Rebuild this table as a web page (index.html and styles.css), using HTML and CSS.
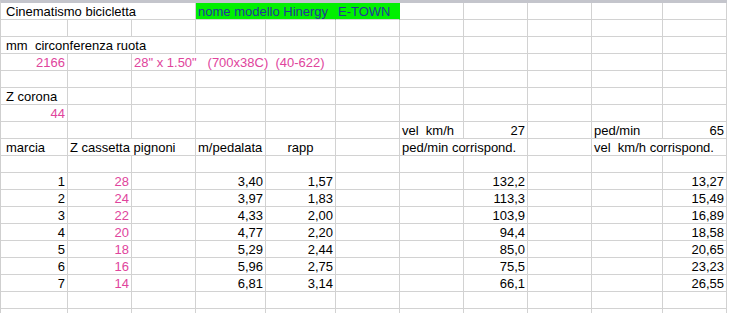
FILE: index.html
```html
<!DOCTYPE html>
<html>
<head>
<meta charset="utf-8">
<link rel="stylesheet" href="styles.css">
</head>
<body>
<table class="sheet">
<colgroup>
<col class="c-a"><col class="c-b"><col class="c-c"><col class="c-d"><col class="c-e"><col class="c-f"><col class="c-g"><col class="c-h"><col class="c-i"><col class="c-j"><col class="c-k">
</colgroup>
<tbody>
<tr><td class="first" colspan="3">Cinematismo bicicletta</td><td class="green" colspan="2">nome modello Hinergy</td><td class="green">E-TOWN</td><td></td><td></td><td></td><td></td><td></td></tr>
<tr><td></td><td></td><td></td><td></td><td></td><td></td><td></td><td></td><td></td><td></td><td></td></tr>
<tr><td class="first" colspan="3">mm  circonferenza ruota</td><td></td><td></td><td></td><td></td><td></td><td></td><td></td><td></td></tr>
<tr><td class="num pink">2166</td><td></td><td class="pink" colspan="3">28" x 1.50"   (700x38C)  (40-622)</td><td></td><td></td><td></td><td></td><td></td><td></td></tr>
<tr><td></td><td></td><td></td><td></td><td></td><td></td><td></td><td></td><td></td><td></td><td></td></tr>
<tr><td class="first">Z corona</td><td></td><td></td><td></td><td></td><td></td><td></td><td></td><td></td><td></td><td></td></tr>
<tr><td class="num pink">44</td><td></td><td></td><td></td><td></td><td></td><td></td><td></td><td></td><td></td><td></td></tr>
<tr><td></td><td></td><td></td><td></td><td></td><td></td><td>vel  km/h</td><td class="num">27</td><td></td><td>ped/min</td><td class="num">65</td></tr>
<tr><td class="first">marcia</td><td colspan="2">Z cassetta pignoni</td><td>m/pedalata</td><td class="center">rapp</td><td></td><td colspan="2">ped/min corrispond.</td><td></td><td colspan="2">vel  km/h corrispond.</td></tr>
<tr><td></td><td></td><td></td><td></td><td></td><td></td><td></td><td></td><td></td><td></td><td></td></tr>
<tr><td class="num">1</td><td class="num pink">28</td><td></td><td class="num">3,40</td><td class="num">1,57</td><td></td><td></td><td class="num">132,2</td><td></td><td></td><td class="num">13,27</td></tr>
<tr><td class="num">2</td><td class="num pink">24</td><td></td><td class="num">3,97</td><td class="num">1,83</td><td></td><td></td><td class="num">113,3</td><td></td><td></td><td class="num">15,49</td></tr>
<tr><td class="num">3</td><td class="num pink">22</td><td></td><td class="num">4,33</td><td class="num">2,00</td><td></td><td></td><td class="num">103,9</td><td></td><td></td><td class="num">16,89</td></tr>
<tr><td class="num">4</td><td class="num pink">20</td><td></td><td class="num">4,77</td><td class="num">2,20</td><td></td><td></td><td class="num">94,4</td><td></td><td></td><td class="num">18,58</td></tr>
<tr><td class="num">5</td><td class="num pink">18</td><td></td><td class="num">5,29</td><td class="num">2,44</td><td></td><td></td><td class="num">85,0</td><td></td><td></td><td class="num">20,65</td></tr>
<tr><td class="num">6</td><td class="num pink">16</td><td></td><td class="num">5,96</td><td class="num">2,75</td><td></td><td></td><td class="num">75,5</td><td></td><td></td><td class="num">23,23</td></tr>
<tr><td class="num">7</td><td class="num pink">14</td><td></td><td class="num">6,81</td><td class="num">3,14</td><td></td><td></td><td class="num">66,1</td><td></td><td></td><td class="num">26,55</td></tr>
<tr><td></td><td></td><td></td><td></td><td></td><td></td><td></td><td></td><td></td><td></td><td></td></tr>
<tr><td></td><td></td><td></td><td></td><td></td><td></td><td></td><td></td><td></td><td></td><td></td></tr>
</tbody>
</table>
</body>
</html>
```
FILE: styles.css
```css
html, body {
  margin: 0;
  padding: 0;
  background: #ffffff;
}
body {
  font-family: "Liberation Sans", Arial, sans-serif;
  font-size: 13px;
  color: #000000;
  overflow: hidden;
}
.sheet {
  border-collapse: separate;
  border-spacing: 0;
  table-layout: fixed;
  width: 727px;
  border-top: 3px solid #c4c5cc;
  border-left: 1px solid #cfcfcf;
}
.c-a { width: 67px; }
.c-b { width: 64px; }
.c-c { width: 64px; }
.c-d { width: 70px; }
.c-e { width: 70px; }
.c-f { width: 64px; }
.c-g { width: 64px; }
.c-h { width: 64px; }
.c-i { width: 64px; }
.c-j { width: 71px; }
.c-k { width: 64px; }
.sheet td {
  box-sizing: border-box;
  height: 17px;
  padding: 1px 2px 0 2px;
  line-height: 15px;
  border-right: 1px solid #d2d2d2;
  border-bottom: 1px solid #d2d2d2;
  white-space: pre;
  overflow: hidden;
  vertical-align: bottom;
}
.sheet td.first {
  padding-left: 5px;
}
.sheet td.num {
  text-align: right;
}
.sheet td.center {
  text-align: center;
}
.pink {
  color: #e0449c;
}
.sheet td.green {
  background: #00f000;
  color: #24379a;
  border-right-color: #00f000;
}
```
